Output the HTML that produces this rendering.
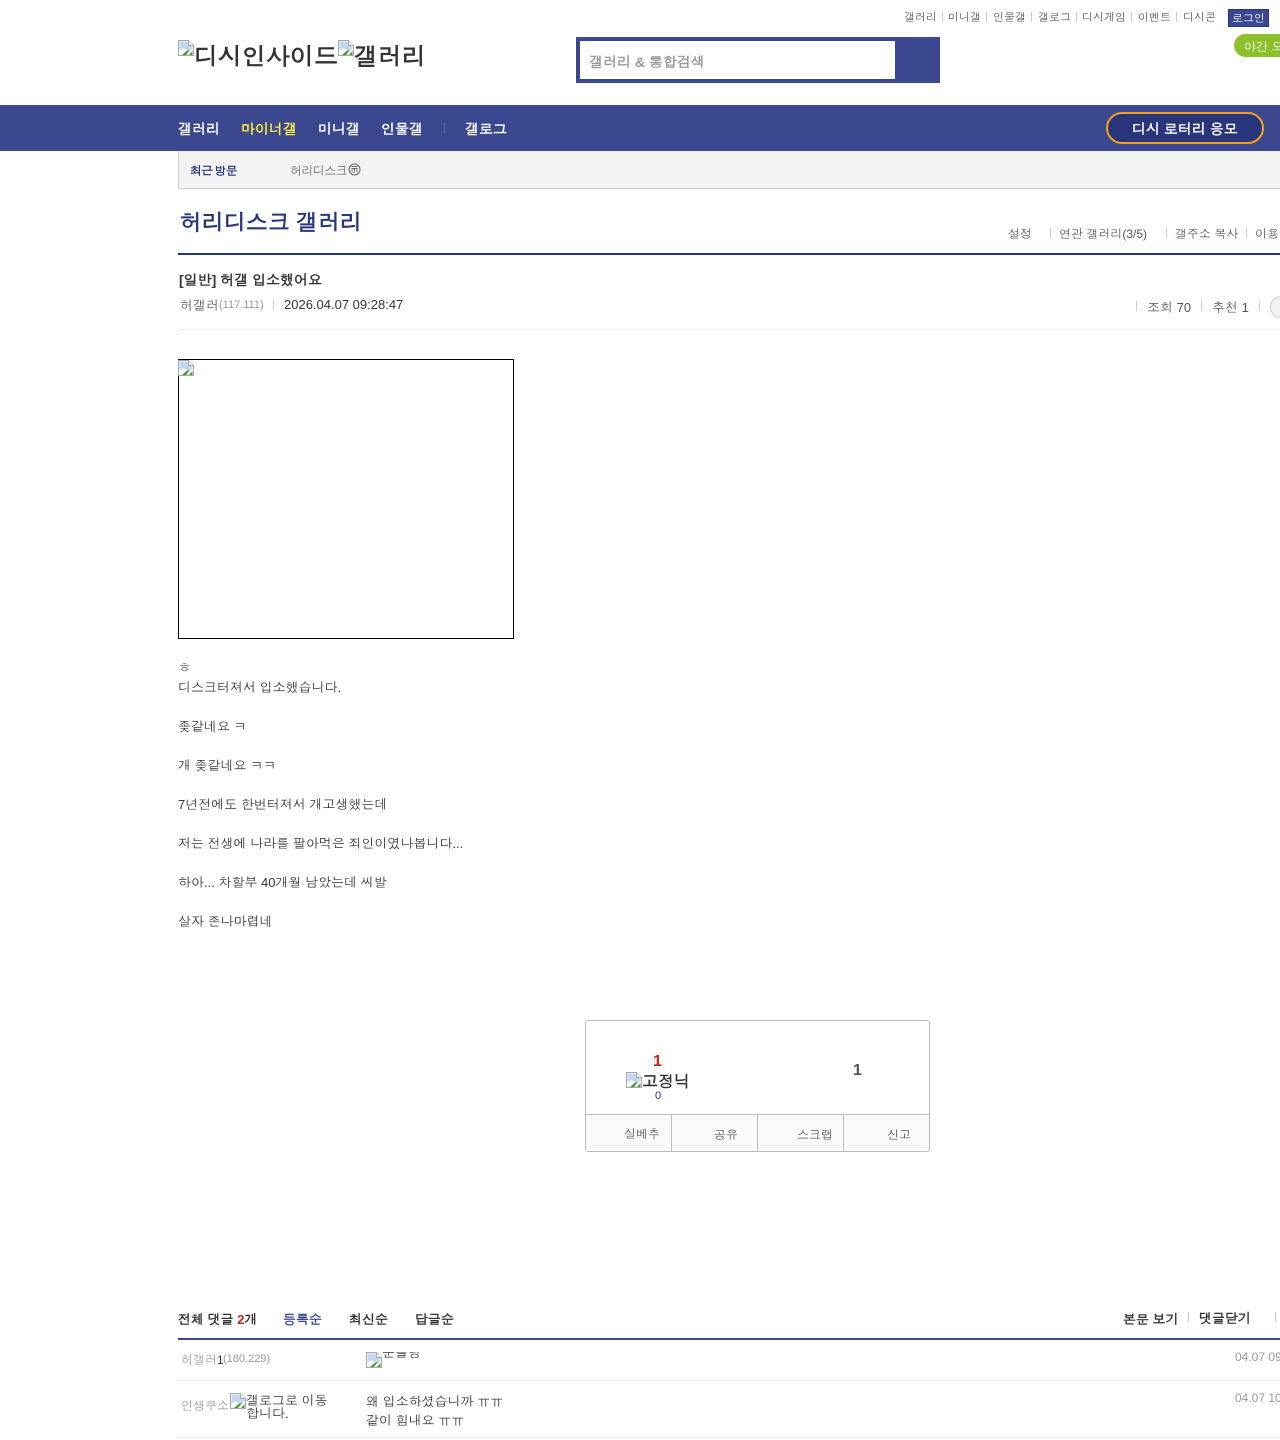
<!DOCTYPE html>
<html lang="ko">
<head>
<meta charset="utf-8">
<title>허리디스크 갤러리</title>
<style>
html,body{margin:0;padding:0;background:#fff}
body{width:1280px;height:1440px;position:relative;overflow:hidden;font-family:"Liberation Sans",dotum,gulim,sans-serif;color:#333;font-size:13px}
.a{position:absolute;white-space:nowrap;line-height:1}
.b{position:absolute}
.g{font-family:gulim,sans-serif}
.sep{position:absolute;width:1px;background:#ccc}
svg.x{position:absolute;width:16px;height:16px}
</style>
</head>
<body>
<svg width="0" height="0" style="position:absolute"><defs>
<symbol id="bi" viewBox="0 0 16 16">
<path d="M0.500 0.500H10.500L15.500 5.500V15.500H0.500Z" fill="#fff" stroke="#a8a8a8"/>
<path d="M1.500 1.500H10V6H14.500V9L10 11 7 13 4 15H1.500Z" fill="#c5d6f2"/>
<path d="M1.500 11C3.500 8.500 5 8 7 9L10 10.500 5 14.500H1.500Z" fill="#fff"/>
<path d="M4 15L9 10.500 12 10 8 15Z" fill="#4d9a32"/>
<path d="M11 15L14.500 11V15Z" fill="#4d9a32"/>
<path d="M10.500 .5V5.500H15.500" fill="#fff" stroke="#a8a8a8"/>
</symbol>
</defs></svg>

<!-- top links -->
<span class="a" style="left:904px;top:13px;font-size:11px;color:#555">갤러리</span><i class="sep" style="left:942px;top:12px;height:10px"></i>
<span class="a" style="left:948px;top:13px;font-size:11px;color:#555">미니갤</span><i class="sep" style="left:986px;top:12px;height:10px"></i>
<span class="a" style="left:993px;top:13px;font-size:11px;color:#555">인물갤</span><i class="sep" style="left:1031px;top:12px;height:10px"></i>
<span class="a" style="left:1038px;top:13px;font-size:11px;color:#555">갤로그</span><i class="sep" style="left:1076px;top:12px;height:10px"></i>
<span class="a" style="left:1082px;top:13px;font-size:11px;color:#555">디시게임</span><i class="sep" style="left:1131px;top:12px;height:10px"></i>
<span class="a" style="left:1138px;top:13px;font-size:11px;color:#555">이벤트</span><i class="sep" style="left:1176px;top:12px;height:10px"></i>
<span class="a" style="left:1183px;top:13px;font-size:11px;color:#555">디시콘</span>
<div class="b" style="left:1228px;top:9px;width:39px;height:16px;background:#3b4890;border:1px solid #29367c"></div>
<span class="a" style="left:1232px;top:14px;font-size:11px;color:#fff">로그인</span>
<div class="b" style="left:1234px;top:34px;width:70px;height:23px;border-radius:12px;background:#8dc02d"></div>
<span class="a" style="left:1244px;top:41px;font-size:12px;color:#fff">야간 모드</span>

<!-- logo -->
<svg class="x" style="left:178px;top:40px"><use href="#bi"/></svg>
<span class="a" style="left:194px;top:46px;font-size:24px;font-weight:bold;color:#333">디시인사이드</span>
<svg class="x" style="left:338px;top:40px"><use href="#bi"/></svg>
<span class="a" style="left:354px;top:46px;font-size:24px;font-weight:bold;color:#333">갤러리</span>

<!-- search -->
<div class="b" style="left:576px;top:37px;width:364px;height:46px;background:#3b4890"></div>
<div class="b" style="left:580px;top:41px;width:315px;height:38px;background:#fff"></div>
<span class="a" style="left:589px;top:54px;font-size:14px;font-weight:bold;color:#999">갤러리 &amp; <span class="g">통</span>합검색</span>

<!-- nav -->
<div class="b" style="left:0;top:105px;width:1280px;height:46px;background:#3b4890"></div>
<span class="a" style="left:178px;top:122px;font-size:14px;font-weight:bold;color:#fff">갤러리</span>
<span class="a" style="left:241px;top:122px;font-size:14px;font-weight:bold;color:#ffed44">마이너갤</span>
<span class="a" style="left:318px;top:122px;font-size:14px;font-weight:bold;color:#fff">미니갤</span>
<span class="a" style="left:381px;top:122px;font-size:14px;font-weight:bold;color:#fff">인물갤</span>
<i class="sep" style="left:444px;top:123px;height:10px;background:#5e6aa8"></i>
<span class="a" style="left:465px;top:122px;font-size:14px;font-weight:bold;color:#fff">갤로그</span>
<div class="b" style="left:1106px;top:112px;width:154px;height:28px;border:2px solid #f7a01e;border-radius:16px;background:#29367c"></div>
<span class="a" style="left:1132px;top:122px;font-size:14px;font-weight:bold;color:#fff">디시 로터리 응모</span>

<!-- recent -->
<div class="b" style="left:178px;top:151px;width:1102px;height:37px;background:#f3f3f3;border-left:1px solid #ccc;border-bottom:1px solid #ccc"></div>
<span class="a" style="left:190px;top:165px;font-size:12px;font-weight:bold;color:#29367c;letter-spacing:-.9px">최근 <span class="g">방</span>문</span>
<span class="a" style="left:290px;top:165px;font-size:12px;color:#666;letter-spacing:-.6px">허리디스크</span>
<svg class="b" style="left:348px;top:163px" width="13" height="13" viewBox="0 0 13 13"><circle cx="6.500" cy="6.500" r="5.500" fill="none" stroke="#666"/><path d="M4 9.500V5M4 5.500H9V9.500M6.500 5.500V9.500M3.500 3.500H9.500" fill="none" stroke="#666" stroke-width=".9"/></svg>

<!-- gallery title -->
<span class="a" style="left:180px;top:212px;font-size:22px;font-weight:bold;color:#29367c;">허리디스크 갤러리</span>
<span class="a" style="left:1008px;top:228px;font-size:12px;color:#555">설정</span><i class="sep" style="left:1050px;top:228px;height:10px"></i>
<span class="a" style="left:1059px;top:228px;font-size:12px;color:#555">연관 갤러리(3/5)</span><i class="sep" style="left:1166px;top:228px;height:10px"></i>
<span class="a" style="left:1175px;top:228px;font-size:12px;color:#555">갤주소 복사</span><i class="sep" style="left:1246px;top:228px;height:10px"></i>
<span class="a" style="left:1255px;top:228px;font-size:12px;color:#555">이용 안내</span>
<div class="b" style="left:178px;top:253px;width:1102px;height:2px;background:#29367c"></div>

<!-- post header -->
<span class="a" style="left:179px;top:273px;font-size:14px;font-weight:bold;color:#333">[일반] 허갤 입소했어요</span>
<span class="a" style="left:180px;top:299px;font-size:13px;color:#555">허갤러</span>
<span class="a" style="left:219px;top:300px;font-size:11px;color:#999">(117.111)</span>
<i class="sep" style="left:273px;top:300px;height:10px"></i>
<span class="a" style="left:284px;top:298px;font-size:13px;color:#333">2026.04.07 09:28:47</span>
<i class="sep" style="left:1136px;top:301px;height:10px"></i>
<span class="a" style="left:1147px;top:301px;font-size:13px;color:#555">조회 70</span>
<i class="sep" style="left:1201px;top:301px;height:10px"></i>
<span class="a" style="left:1212px;top:301px;font-size:13px;color:#555">추천 1</span>
<i class="sep" style="left:1259px;top:301px;height:10px"></i>
<div class="b" style="left:1270px;top:296px;width:30px;height:20px;border:1px solid #ccc;border-radius:11px;background:#f3f3f3"></div>
<div class="b" style="left:178px;top:329px;width:1102px;height:1px;background:#eee"></div>

<!-- image -->
<div class="b" style="left:178px;top:359px;width:334px;height:278px;border:1px solid #000"></div>
<svg class="x" style="left:178px;top:360px"><use href="#bi"/></svg>

<!-- body -->
<span class="a" style="left:178px;top:661px;font-size:13px;color:#333">ㅎ</span>
<span class="a" style="left:178px;top:681px;font-size:13px;color:#333">디스크터져서 입소했습니다.</span>
<span class="a" style="left:178px;top:720px;font-size:13px;color:#333">좆같네요 ㅋ</span>
<span class="a" style="left:178px;top:759px;font-size:13px;color:#333">개 좆같네요 ㅋㅋ</span>
<span class="a" style="left:178px;top:798px;font-size:13px;color:#333">7년전에도 한번터져서 개고생했는데</span>
<span class="a" style="left:178px;top:837px;font-size:13px;color:#333">저는 전생에 나라를 팔아먹은 죄인이였나봅니다...</span>
<span class="a" style="left:178px;top:876px;font-size:13px;color:#333">하아... 차할부 40개월 남았는데 씨발</span>
<span class="a" style="left:178px;top:915px;font-size:13px;color:#333">살자 존나마렵네</span>

<!-- recommend box -->
<div class="b" style="left:585px;top:1020px;width:343px;height:130px;border:1px solid #bbb;border-radius:3px"></div>
<div class="b" style="left:586px;top:1114px;width:343px;height:37px;background:#f9f9f9;border-top:1px solid #bbb;border-radius:0 0 3px 3px;box-sizing:border-box"></div>
<i class="sep" style="left:671px;top:1115px;height:36px;background:#bbb"></i>
<i class="sep" style="left:757px;top:1115px;height:36px;background:#bbb"></i>
<i class="sep" style="left:843px;top:1115px;height:36px;background:#bbb"></i>
<span class="a" style="left:653px;top:1054px;font-size:16px;font-weight:bold;color:#c4241a">1</span>
<svg class="x" style="left:626px;top:1072px"><use href="#bi"/></svg>
<span class="a" style="left:642px;top:1073px;font-size:16px;font-weight:bold;color:#333">고<span class="g">정</span>닉</span>
<span class="a" style="left:655px;top:1091px;font-size:11px;color:#29367c">0</span>
<span class="a" style="left:853px;top:1063px;font-size:16px;font-weight:bold;color:#555">1</span>
<span class="a" style="left:624px;top:1128px;font-size:12px;color:#555">실베추</span>
<span class="a" style="left:714px;top:1129px;font-size:12px;color:#555">공유</span>
<span class="a" style="left:797px;top:1129px;font-size:12px;color:#555">스크랩</span>
<span class="a" style="left:887px;top:1129px;font-size:12px;color:#555">신고</span>

<!-- comments -->
<span class="a" style="left:178px;top:1313px;font-size:13px;font-weight:bold;color:#333">전체 댓글 <span style="color:#c4241a">2</span>개</span>
<span class="a" style="left:283px;top:1313px;font-size:13px;font-weight:bold;color:#3b4890">등록순</span>
<span class="a" style="left:349px;top:1313px;font-size:13px;font-weight:bold;color:#333">최신순</span>
<span class="a" style="left:415px;top:1313px;font-size:13px;font-weight:bold;color:#333">답글순</span>
<span class="a" style="left:1123px;top:1313px;font-size:13px;font-weight:bold;color:#333">본문 보기</span>
<i class="sep" style="left:1188px;top:1312px;height:10px"></i>
<span class="a" style="left:1199px;top:1312px;font-size:13px;font-weight:bold;color:#333">댓글닫기</span>
<i class="sep" style="left:1275px;top:1312px;height:10px"></i>
<div class="b" style="left:178px;top:1338px;width:1102px;height:2px;background:#3b4890"></div>

<span class="a" style="left:181px;top:1354px;font-size:12px;color:#999">허갤러</span>
<span class="a" style="left:217px;top:1354px;font-size:12px;color:#333">1</span>
<span class="a" style="left:223px;top:1354px;font-size:11px;color:#999">(180.229)</span>
<svg class="x" style="left:366px;top:1352px"><use href="#bi"/></svg>
<div class="b" style="left:382px;top:1352px;width:50px;height:6px;overflow:hidden"><span class="a" style="left:0;top:-6px;font-size:13px;color:#333">운솔링</span></div>
<span class="a" style="left:1235px;top:1351px;font-size:12px;color:#999">04.07 09:41:12</span>
<div class="b" style="left:178px;top:1380px;width:1102px;height:1px;background:#eee"></div>

<span class="a" style="left:181px;top:1400px;font-size:12px;color:#999">인생쿠소</span>
<svg class="x" style="left:230px;top:1393px"><use href="#bi"/></svg>
<span class="a" style="left:246px;top:1394px;font-size:13px;color:#333">갤로그로 이동</span>
<span class="a" style="left:246px;top:1407px;font-size:13px;color:#333">합니다.</span>
<span class="a" style="left:366px;top:1395px;font-size:13px;color:#333">왜 입소하셨습니까 ㅠㅠ</span>
<span class="a" style="left:366px;top:1414px;font-size:13px;color:#333">같이 힘내요 ㅠㅠ</span>
<span class="a" style="left:1235px;top:1392px;font-size:12px;color:#999">04.07 10:02:33</span>
<div class="b" style="left:178px;top:1437px;width:1102px;height:1px;background:#eee"></div>
</body>
</html>
